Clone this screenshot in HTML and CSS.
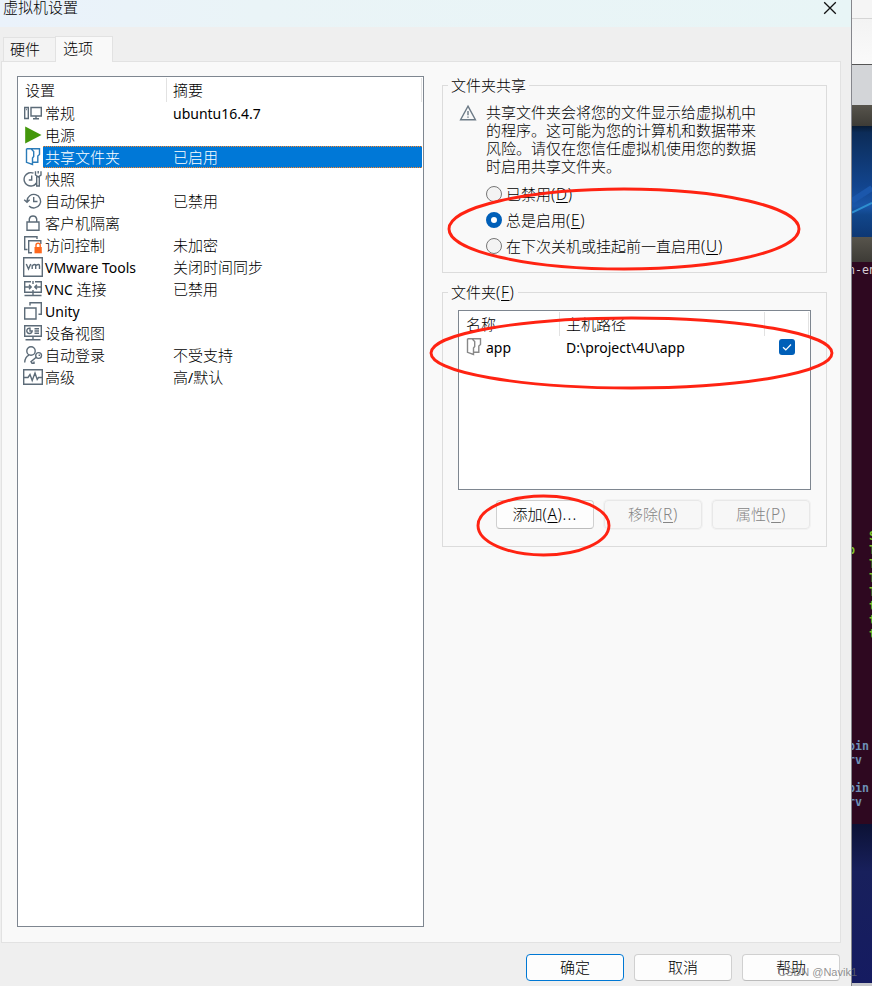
FILE: index.html
```html
<!DOCTYPE html>
<html lang="zh-CN">
<head>
<meta charset="utf-8">
<title>虚拟机设置</title>
<link rel="stylesheet" href="styles.css">
</head>
<body>
<div class="screen">
  <main class="dialog">
    <header class="titlebar">
      <h1>虚拟机设置</h1>
      <svg class="close" width="14" height="14" viewBox="0 0 14 14"><path d="M1.2 1.2 12.8 12.8M12.8 1.2 1.2 12.8"/></svg>
    </header>
    <nav class="tabs">
      <div class="tab">硬件</div>
      <div class="tab active">选项</div>
    </nav>
    <section class="panel">
      <div class="settings">
        <div class="head"><span class="c1">设置</span><span class="c2">摘要</span></div>
        <div class="row"><svg class="ic" viewBox="0 0 20 20"><path d="M1.7 4.5H5.3V15.5H1.7ZM3.2 6.5H4M8 4.5H18.3V13H8ZM13 13V15.5M10 15.7H16"/></svg><span class="name">常规</span><span class="l">ubuntu16.4.7</span></div>
        <div class="row"><svg class="ic" viewBox="0 0 20 20"><path class="play" d="M2.2 1.5 18.5 10 2.2 18.5Z"/></svg><span class="name">电源</span></div>
        <div class="row selected"><svg class="ic folder" viewBox="0 0 20 20"><path d="M3.5 1.7H16.5V7.5L14.8 9V15.3H9.5M3.5 1.7V15.3L9.5 17.5V11L10.700 9.5V4.5L8 1.7"/></svg><span class="name">共享文件夹</span><span>已启用</span></div>
        <div class="row"><svg class="ic" viewBox="0 0 20 20"><path d="M10.5 4.2A6.7 6.7 0 1 0 13.4 14M8.7 6.5V11H5.8M12.5 2.2V6L15.2 7.8 18 6V2.2M13.7 7.5V17H16.3V7.5M15.2 2V4.5"/></svg><span class="name">快照</span></div>
        <div class="row"><svg class="ic" viewBox="0 0 20 20"><path d="M4 10A6.8 6.8 0 1 1 6 15M1.2 8.8 4 11.2 6.6 8.8M10.7 6V10.5H14.5"/></svg><span class="name">自动保护</span><span>已禁用</span></div>
        <div class="row"><svg class="ic" viewBox="0 0 20 20"><path d="M4 9H16V17.2H4ZM6.3 9V6A3.8 3.8 0 0 1 13.7 6V9"/></svg><span class="name">客户机隔离</span></div>
        <div class="row"><svg class="ic" viewBox="0 0 20 20"><path d="M4.5 14.5H1.7V1.7H14V4M9 17.7H5.7V5.7H17.8V9"/><path class="badge" d="M11.5 12H18.8V18.3H11.5Z"/><path class="shackle" d="M13 12V10.3A2 2 0 0 1 17.2 10.3V12"/></svg><span class="name">访问控制</span><span>未加密</span></div>
        <div class="row"><svg class="ic" viewBox="0 0 20 20"><path d="M.7.8H19.3V19.2H.7ZM3.3 7 5.5 12 7.7 7M9.2 12V7.8M9.2 8.7Q12.7 6.2 12.7 9V12M12.7 8.7Q16.5 6.2 16.5 9V12"/></svg><span class="name l">VMware Tools</span><span>关闭时间同步</span></div>
        <div class="row"><svg class="ic" viewBox="0 0 20 20"><path d="M8 2.7H1.7V13.3H18.3V2.7H12M2 8H7.800M18 8H12.2M6 5.8 8.2 8 6 10.2M14 5.8 11.8 8 14 10.2M10 2V5M10 11V16M1.5 16.5H18.5"/></svg><span class="name"><span class="l">VNC </span>连接</span><span>已禁用</span></div>
        <div class="row"><svg class="ic" viewBox="0 0 20 20"><path d="M1.7 7H13V18H1.7ZM7 4.5V1.7H18.3V13.2H15.5"/></svg><span class="name l">Unity</span></div>
        <div class="row"><svg class="ic" viewBox="0 0 20 20"><path d="M1.7 2.7H18.3V13.2H1.7ZM10 13.2V16M2.5 16.7H17.5M7 5.2A2.7 2.7 0 1 0 9.2 8H7ZM11.5 5.7H16M11.5 8H16M11.5 10.3H16"/></svg><span class="name">设备视图</span></div>
        <div class="row"><svg class="ic" viewBox="0 0 20 20"><circle cx="8" cy="6" r="4.2"/><path d="M1.7 17.5Q2 12 6 10.2M13.2 12.2 8 16.7 9 18.2 11 18.2V16.5"/><circle cx="15.6" cy="10.5" r="2.9"/><path d="M15.6 10.3H17"/></svg><span class="name">自动登录</span><span>不受支持</span></div>
        <div class="row"><svg class="ic" viewBox="0 0 20 20"><path d="M.7 2.8H19.3V17.2H.7ZM1 10.5H5L7 7.5 9.2 13.5 12 6 14.2 12.5 15.5 10.5H19"/></svg><span class="name">高级</span><span>高<span class="l">/</span>默认</span></div>
      </div>
      <div class="side">
        <section class="group sharing">
          <h2>文件夹共享</h2>
          <div class="warning">
            <svg width="18" height="18" viewBox="0 0 18 18"><path d="M9 2.2 16.4 15.7H1.6ZM9 7V11.3M9 12.4V13.8"/></svg>
            <p>共享文件夹会将您的文件显示给虚拟机中<br>的程序。这可能为您的计算机和数据带来<br>风险。请仅在您信任虚拟机使用您的数据<br>时启用共享文件夹。</p>
          </div>
          <div class="radios">
            <div class="radio"><i></i><span>已禁用<span class="l key">(<u>D</u>)</span></span></div>
            <div class="radio on"><i></i><span>总是启用<span class="l key">(<u>E</u>)</span></span></div>
            <div class="radio"><i></i><span>在下次关机或挂起前一直启用<span class="l key">(<u>U</u>)</span></span></div>
          </div>
        </section>
        <section class="group folders">
          <h2>文件夹<span class="l key">(<u>F</u>)</span></h2>
          <div class="table">
            <div class="thead"><span>名称</span><span>主机路径</span><span></span></div>
            <div class="trow">
              <svg class="ic gray" viewBox="0 0 20 20"><path d="M3.5 1.7H16.5V7.5L14.8 9V15.3H9.5M3.5 1.7V15.3L9.5 17.5V11L10.700 9.5V4.5L8 1.7"/></svg>
              <span class="fname l">app</span><span class="path l">D:\project\4U\app</span>
              <svg class="check" width="16" height="16" viewBox="0 0 16 16"><rect width="16" height="16" rx="3"/><path d="M4 8.2 6.8 10.8 12 5.5"/></svg>
            </div>
          </div>
          <div class="actions">
            <div class="btn">添加<span class="l key">(<u>A</u>)<span class="dots">...</span></span></div>
            <div class="btn off">移除<span class="l key">(<u>R</u>)</span></div>
            <div class="btn off">属性<span class="l key">(<u>P</u>)</span></div>
          </div>
        </section>
      </div>
    </section>
    <footer class="footer">
      <div class="btn primary">确定</div>
      <div class="btn">取消</div>
      <div class="btn">帮助</div>
    </footer>
  </main>
  <aside class="desktop">
    <div class="toolbar"></div>
    <div class="menubar"></div>
    <div class="bar"></div>
    <svg class="wall" width="20" height="111" viewBox="0 0 20 111" preserveAspectRatio="none">
      <defs><linearGradient id="w" x1="0" y1="0" x2="0" y2="1"><stop offset="0" stop-color="#081b35"/><stop offset=".06" stop-color="#0c2c58"/><stop offset=".55" stop-color="#12458f"/><stop offset=".72" stop-color="#1a56a8"/><stop offset=".8" stop-color="#11468a"/><stop offset="1" stop-color="#0d3774"/></linearGradient></defs>
      <rect width="20" height="111" fill="url(#w)"/>
      <path d="M0 75 20 62" stroke="#1b57ab" stroke-width="6"/><path d="M0 86.500 20 77" stroke="#2e8fd0" stroke-width="2"/>
    </svg>
    <div class="bar tall"></div>
    <pre class="term">n-en


















<b class="g">   S</b>
<b class="g">p  T</b>
<b class="g">   T</b>
<b class="g">   T</b>
<b class="g">   T</b>
<b class="g">   t</b>
<b class="g">   t</b>
<b class="g">   t</b>







<b>bin</b>
<b>rv</b>

<b>bin</b>
<b>rv</b></pre>
    <div class="navy"></div>
  </aside>
  <svg class="marks" width="872" height="986" viewBox="0 0 872 986">
    <ellipse cx="624" cy="229" rx="175" ry="40"/>
    <ellipse cx="631.500" cy="353" rx="200.500" ry="35"/>
    <ellipse cx="543.500" cy="525.500" rx="65.500" ry="29.500"/>
  </svg>
  <div class="watermark">CSDN @Navik1</div>
</div>
</body>
</html>
```

FILE: styles.css
```css
* { box-sizing: border-box; }
body {
  margin: 0;
  font: 300 15px/22px "Noto Sans CJK SC", sans-serif;
  color: #000;
}
h1, h2, p, pre { margin: 0; font-size: inherit; font-weight: inherit; }
u { text-underline-offset: 2px; text-decoration-thickness: 1px; }
.l { font-family: "Noto Sans", "Noto Sans CJK SC", sans-serif; font-size: 14px; font-weight: 400; white-space: pre; }
.key { font-size: 15.5px; line-height: 1; font-weight: 300; letter-spacing: .7px; }
.dots { letter-spacing: 1.2px; }
.screen { position: relative; display: flex; width: 872px; height: 986px; overflow: hidden; }
.dialog { display: flex; flex-direction: column; width: 852px; height: 986px; background: #efefef; border-right: 1px solid #85868c; }

.titlebar { display: flex; justify-content: space-between; height: 27px; padding: 0 14px 0 3px; background: linear-gradient(90deg, #eaf2fb, #eaf4f7 30%, #e8f5f6); }
.titlebar h1 { line-height: 14px; font-weight: 300; }
.close { margin-top: 1px; fill: none; stroke: #111; stroke-width: 1.3; }

.tabs { display: flex; align-items: flex-end; height: 35px; padding-left: 3px; margin-bottom: -1px; z-index: 1; }
.tab { width: 52px; height: 24px; margin-bottom: 1px; padding-left: 6px; border: 1px solid #e2e2e2; border-width: 1px 0 0 1px; background: #f3f3f3; line-height: 22px; }
.tab.active { width: 58px; height: 26px; margin-bottom: 0; padding-left: 7px; border-width: 1px 1px 0; background: #f9f9f9; }

.panel { display: flex; width: 840px; height: 882px; margin-left: 1px; padding: 14px 13px 0 15px; border: 1px solid #e2e2e2; background: #f9f9f9; }
.settings { width: 407px; height: 851px; border: 1px solid #7e8690; background: #fff; }
.head { display: flex; height: 25px; }
.head span { height: 24px; margin-top: 1px; line-height: 23px; border-right: 1px solid #e2e2e2; }
.c1 { width: 149px; padding-left: 7px; }
.c2 { width: 255px; padding-left: 6px; }
.row { display: flex; height: 22px; margin: 0 1px 0 5px; }
.ic { width: 20px; height: 20px; margin-top: 1px; flex: none; fill: none; stroke: #5c6b78; stroke-width: 1.4; }
.ic .play { fill: #43970b; stroke: none; }
.ic .badge { fill: #ff681d; stroke: none; }
.ic .shackle { stroke: #ff681d; }
.ic.folder { stroke: #2a7bb8; }
.ic.gray { stroke: #888; }
.row > span { height: 22px; line-height: 21px; }
.row > span.l { line-height: 23px; }
.row .name { width: 130px; padding-left: 2px; }
.row > span:last-child:not(.name) { flex: 1; }
.selected { color: #fff; }
.selected > span {
  background:
    repeating-linear-gradient(90deg, #ff8728 0 1px, #0078d7 1px 2px) top / 100% 1px no-repeat,
    repeating-linear-gradient(90deg, #ff8728 0 1px, #0078d7 1px 2px) bottom / 100% 1px no-repeat,
    #0078d7;
}

.side { margin-left: 18px; padding-top: 9px; }
.group { width: 385px; border: 1px solid #dcdcdc; }
.group h2 { width: max-content; height: 20px; margin: -11px 0 0 5px; padding: 0 3px; background: #f9f9f9; line-height: 19px; }
.sharing { height: 188px; }
.folders { height: 255px; margin-top: 19px; }
.warning { display: flex; padding: 8px 0 0 16px; }
.warning svg { margin-top: 1px; fill: none; stroke: #6c7a86; stroke-width: 1.4; }
.warning p { margin-left: 9px; line-height: 18px; white-space: nowrap; }
.radios { margin: 6px 0 0 43px; }
.radio { display: flex; align-items: center; height: 26px; gap: 4px; }
.radio i { width: 16px; height: 16px; border: 1px solid #777; border-radius: 50%; background: #f3f3f3; }
.radio.on i { border: 5px solid #005fb8; background: #fff; }

.table { width: 353px; height: 180px; margin: 8px 0 0 15px; border: 1px solid #7e8690; background: #fff; }
.thead { display: flex; height: 25px; padding-top: 1px; line-height: 24px; }
.thead span { border-right: 1px solid #e2e2e2; padding-left: 7px; }
.thead span:nth-child(1) { width: 101px; }
.thead span:nth-child(2) { width: 205px; padding-left: 6px; }
.thead span:nth-child(3) { width: 44px; }
.trow { display: flex; height: 24px; padding-left: 5px; line-height: 23px; }
.fname { width: 82px; padding-left: 2px; }
.path { width: 213px; }
.check { margin-top: 3px; fill: #005fb8; }
.check path { fill: none; stroke: #fff; stroke-width: 1.2; }

.actions { display: flex; gap: 10px; margin: 10px 0 0 53px; }
.btn { width: 98px; height: 29px; border: 1px solid #d0d0d0; border-bottom-color: #bcbcbc; border-radius: 4px; background: #fdfdfd; text-align: center; line-height: 26px; }
.btn.off { border-color: #e8e8e8; background: #f7f7f7; color: #858585; outline: 1px solid #f2f2f2; }
.footer { display: flex; justify-content: flex-end; gap: 10px; padding: 11px 11px 0 0; }
.footer .btn { height: 27px; line-height: 23px; }
.btn.primary { border: 1px solid #0078d4; }

.desktop { width: 20px; overflow: hidden; background: #c5c6ca; }
.toolbar { height: 64px; background: linear-gradient(#f5f5f5 18px, #d5d5d5 18px, #d5d5d5 19px, #f3f3f3 19px, #fafafa); }
.menubar { height: 41px; border-top: 1px solid #555; background: #d3d5d8; }
.bar { height: 21px; background: linear-gradient(#57544c, #3d3b36); }
.bar.tall { height: 25px; }
.wall { display: block; }
.term { width: 30px; height: 562px; margin-left: -4px; padding-top: 1px; background: #2e0820; color: #d6ccd3; font: 11.63px/14px "DejaVu Sans Mono", monospace; }
.term b { color: #6d8fb7; }
.term .g { color: #7fc52b; }
.navy { height: 159px; background: linear-gradient(#0c1235, #18205c 30%, #151b61); }

.marks { position: absolute; inset: 0; fill: none; stroke: #ff2312; stroke-width: 2.9; }
.watermark { position: absolute; left: 778px; top: 964px; color: rgba(110, 110, 110, .75); font: 11px/16px "Liberation Sans", sans-serif; white-space: nowrap; }
```
